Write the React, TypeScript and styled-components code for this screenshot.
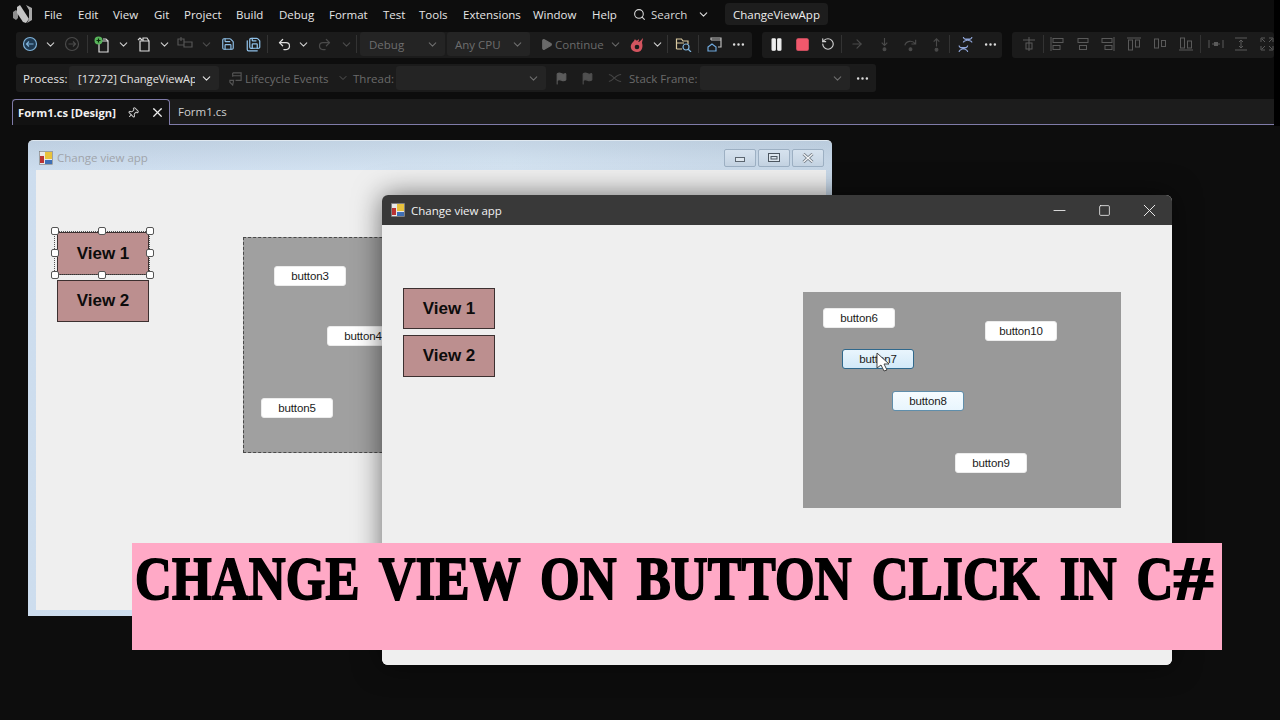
import React from "react";
import styled, { createGlobalStyle } from "styled-components";
import { ChevronDown, Search, Save, SaveAll, Undo2, Redo2, Play, Flag, X, Pin, Pause, RotateCcw, ArrowRight, MoreHorizontal, Minus, Square } from "lucide-react";

const Global = createGlobalStyle`
  html, body { margin: 0; padding: 0; background: #0d0d0d; }
  #root { width: 1280px; height: 720px; }
`;
const UI = `"Open Sans", "Noto Sans", sans-serif`;

const Page = styled.div`
  width: 1280px; height: 720px; background: #0d0d0d; overflow: hidden; position: relative;
  display: flex; flex-direction: column; font-family: ${UI}; font-size: 12px; color: #e4e4e4;
`;
const MenuBar = styled.div`
  height: 30px; box-sizing: border-box; padding: 0 0 2px 12px; display: flex; align-items: center; flex: none;
`;
const Logo = styled.svg`width: 22px; height: 22px; flex: none; margin-right: 10px;`;
const MenuItem = styled.span`width: ${p => p.$w}px; font-size: 11.5px; color: #e6e6e6; white-space: nowrap; flex: none;`;
const SearchBox = styled.div`display: flex; align-items: center; gap: 5px; width: 92px; flex: none; color: #d8d8d8; font-size: 11.5px;`;
const SolutionName = styled.div`
  width: 103px; height: 22px; background: #1d1d1d; border-radius: 4px; font-size: 11.5px; color: #eee;
  display: flex; align-items: center; justify-content: center; flex: none;
`;
const ToolRow = styled.div`height: 26px; display: flex; padding-left: 16px; gap: 10px; flex: none; margin-top: 2px;`;
const ToolGroup = styled.div`
  width: ${p => p.$w}px; height: 26px; background: #1b1b1b; border-radius: 3px; display: flex; align-items: center;
  flex: none; padding: 0 0 2px ${p => p.$pl ?? 1}px; box-sizing: border-box; overflow: hidden;
`;
const Slot = styled.span`
  width: ${p => p.$w ?? 26}px; height: 22px; display: flex; align-items: center; justify-content: center; flex: none;
  color: ${p => p.$c ?? "#dcdcdc"};
`;
const Sep = styled.span`width: 1px; height: 18px; background: #333; flex: none; margin: 0 ${p => p.$m ?? 0}px;`;
const Combo = styled.div`
  width: ${p => p.$w}px; height: 24px; border-radius: 3px; background: #242424; flex: none; display: flex; align-items: center;
  justify-content: space-between; padding: 0 6px 0 ${p => p.$pl ?? 9}px; box-sizing: border-box; color: ${p => p.$c ?? "#6e6e6e"};
  margin-right: ${p => p.$mr ?? 0}px; white-space: nowrap; overflow: hidden; font-size: 11.5px;
`;
const ComboText = styled.span`overflow: hidden; width: 117px; flex: none; font-size: 11.1px;`;
const Label = styled.span`color: ${p => p.$c ?? "#6a6a6a"}; font-size: 11.5px; flex: none; white-space: nowrap; width: ${p => p.$w ? p.$w + "px" : "auto"};`;
const DebugRow = styled.div`
  margin: 6px 0 0 16px; width: 860px; height: 28px; background: #1b1b1b; border-radius: 3px; display: flex; align-items: center;
  padding-left: 7px; box-sizing: border-box; flex: none;
`;
const TabStrip = styled.div`
  margin: 7px 6px 0 12px; height: 26px; box-sizing: border-box; background: #1c1c1c; border-bottom: 1.5px solid #7f7ba8; display: flex; align-items: stretch; flex: none;
`;
const ActiveTab = styled.div`
  width: 158px; box-sizing: border-box; height: 26px; background: #121212; border: 1px solid #7f7ba8; border-bottom: none; border-radius: 4px 4px 0 0;
  display: flex; align-items: center; padding-left: 5px; font-weight: 700; font-size: 11.2px; color: #f0f0f0; white-space: nowrap;
`;
const TabTitle = styled.span`width: 104px; flex: none;`;
const PinIcon = styled(Pin)`transform: rotate(45deg);`;
const InactiveTab = styled.div`display: flex; align-items: center; padding-left: 8px; font-size: 11.5px; color: #cfcfcf;`;

const Canvas = styled.div`flex: 1; position: relative;`;
const EdgeStrip = styled.div`position: absolute; top: 0; right: 0; width: 6px; height: 126px; background: #000;`;

const FormBack = styled.div`
  position: absolute; left: 28px; top: 140px; width: 804px; height: 476px; box-sizing: border-box;
  background: linear-gradient(180deg, rgba(150,170,190,.28), rgba(255,255,255,0) 30px), linear-gradient(90deg, #cdddee, #d6e5f3 60%, #c8d8e8);
  border-radius: 5px 5px 0 0; border-top: 1px solid #dfe8f0;
  display: flex; flex-direction: column; padding: 0 6px 6px 8px;
`;
const BackTitle = styled.div`
  height: 29px; box-sizing: border-box; padding: 4px 0 0 3px; display: flex; align-items: center; gap: 4px; color: #a0a4aa; font-size: 11.5px; flex: none; position: relative;
`;
const BackControls = styled.div`position: absolute; right: 2px; top: 8px; display: flex; gap: 2px;`;
const BackControl = styled.span`
  width: 32px; height: 18px; box-sizing: border-box; border: 1px solid #9db0c3; border-radius: 2px; display: flex; align-items: center; justify-content: center;
  background: linear-gradient(#d6e2ee, #c4d3e2);
`;
const Client = styled.div`flex: 1; background: #efefef; position: relative;`;

const FormFront = styled.div`
  position: absolute; left: 382px; top: 195px; width: 790px; height: 470px; border-radius: 6px; overflow: hidden;
  background: #efefef; box-shadow: 0 0 28px rgba(0,0,0,.55); display: flex; flex-direction: column;
`;
const FrontTitle = styled.div`
  height: 30px; background: #393939; color: #f2f2f2; display: flex; align-items: center; padding-left: 9px; gap: 6px; flex: none; font-size: 11.5px;
`;
const FrontControls = styled.div`margin-left: auto; display: flex; color: #f0f0f0;`;
const FrontControl = styled.span`width: 45px; display: flex; justify-content: center; align-items: center;`;

const ViewBtn = styled.div`
  position: absolute; left: ${p => p.$x}px; top: ${p => p.$y}px; width: ${p => p.$w}px; height: ${p => p.$h}px; box-sizing: border-box;
  background: #bc8f8f; border: 1px solid #3c3030; display: flex; align-items: center; justify-content: center;
  font-family: "Liberation Sans", Arial, sans-serif; font-weight: 700; font-size: 17px; color: #0c0c0c;
`;
const GrayPanel = styled.div`
  position: absolute; left: ${p => p.$x}px; top: ${p => p.$y}px; width: ${p => p.$w}px; height: ${p => p.$h}px; box-sizing: border-box;
  background: ${p => p.$bg}; border: ${p => p.$dash ? "1px dashed #4a4a4a" : "none"};
`;
const SmallBtn = styled.div`
  position: absolute; left: ${p => p.$x}px; top: ${p => p.$y}px; width: 72px; height: 20px; box-sizing: border-box; border-radius: 3px;
  background: ${p => p.$state === "hover" ? "linear-gradient(#e9f5fd,#d3e9f8)" : p.$state === "focus" ? "linear-gradient(#f6fcff,#e8f5fd)" : "#fff"};
  border: 1px solid ${p => p.$state === "hover" ? "#2f688c" : p.$state === "focus" ? "#5f8eab" : "#ececec"};
  display: flex; align-items: center; justify-content: center;
  font-family: "Liberation Sans", Arial, sans-serif; font-size: 11.5px; letter-spacing: -.15px; color: #1a1a1a;
`;
const Selection = styled.div`
  position: absolute; left: 18px; top: 61px; width: 96px; height: 44px; border: 1px dotted #555; box-sizing: border-box;
`;
const Handle = styled.span`
  position: absolute; left: ${p => p.$x}px; top: ${p => p.$y}px; width: 6px; height: 6px; background: #fff; border: 1px solid #555; border-radius: 2px;
`;
const Pointer = styled.svg`position: absolute; left: 494px; top: 127px; width: 13px; height: 20px;`;

const Banner = styled.div`
  position: absolute; left: 132px; top: 543px; width: 1090px; height: 107px; background: #ffa9c6; overflow: hidden;
`;
const BannerText = styled.div`
  font-family: "Liberation Serif", serif; font-weight: 700; font-size: 61px; line-height: 72px; color: #000; white-space: nowrap;
  width: max-content; -webkit-text-stroke: 1.8px #000; transform-origin: 0 0; transform: scaleX(0.835); margin: 0 0 0 3px; word-spacing: 8.5px; letter-spacing: .2px;
`;
const HashMark = styled.span`display: inline-block; transform-origin: 0 50%; transform: scaleX(1.55);`;

const Chev = ({ c = "#cfcfcf" }: { c?: string }) => <Slot $w={14} $c={c}><ChevronDown size={13} strokeWidth={2} /></Slot>;
const WinIcon = () => (
  <svg width="14" height="14" viewBox="0 0 14 14">
    <rect x=".5" y=".5" width="13" height="13" fill="#e8e8e8" stroke="#777" strokeWidth=".6" />
    <rect x="6" y="1" width="7" height="7" fill="#e8c23c" />
    <rect x="1" y="5" width="4" height="7" fill="#b33" />
    <rect x="6" y="9" width="7" height="4" fill="#3f6fb5" />
  </svg>
);
const AlignIcon = ({ kind }: { kind: number }) => {
  const s = { stroke: "#5a5a5a", strokeWidth: 1, fill: "none" };
  const shapes: Record<number, React.ReactNode> = {
    0: <><path d="M2 4h12M8 1v14" {...s} /><rect x="5" y="7" width="6" height="6" {...s} /></>,
    1: <><path d="M2 1v14" {...s} /><rect x="4" y="2.5" width="10" height="4" {...s} /><rect x="4" y="9.5" width="7" height="4" {...s} /></>,
    2: <><rect x="3" y="2.5" width="10" height="4" {...s} /><rect x="4.5" y="9.5" width="7" height="4" {...s} /></>,
    3: <><path d="M14 1v14" {...s} /><rect x="2" y="2.5" width="10" height="4" {...s} /><rect x="5" y="9.5" width="7" height="4" {...s} /></>,
    4: <><path d="M1 2h14" {...s} /><rect x="2.5" y="4" width="4" height="10" {...s} /><rect x="9.5" y="4" width="4" height="7" {...s} /></>,
    5: <><rect x="2.5" y="3" width="4" height="9" {...s} /><rect x="9.5" y="4.5" width="4" height="6" {...s} /></>,
    6: <><path d="M1 14h14" {...s} /><rect x="2.5" y="2" width="4" height="10" {...s} /><rect x="9.5" y="5" width="4" height="7" {...s} /></>,
    7: <><path d="M1 4v8M15 4v8M4 8h8" {...s} /><rect x="6" y="6" width="4" height="4" fill="#5a5a5a" /></>,
    8: <><path d="M2 2h12M2 14h12M8 4v8M6 6l2-2 2 2M6 10l2 2 2-2" {...s} /></>,
    9: <><path d="M2 6V2h4M10 2h4v4M14 10v4h-4M6 14H2v-4M3 3l3 3M13 3l-3 3M13 13l-3-3M3 13l3-3" {...s} /></>,
  };
  return <svg width="16" height="16" viewBox="0 0 16 16">{shapes[kind]}</svg>;
};

const Wire = ({ children, w = 16 }: { children: React.ReactNode; w?: number }) => (
  <svg width={w} height={w} viewBox="0 0 16 16" fill="none" strokeWidth="1.2" stroke="currentColor">{children}</svg>
);

export default function App() {
  const menus: [string, number][] = [["File", 34], ["Edit", 35], ["View", 41], ["Git", 30], ["Project", 52], ["Build", 43], ["Debug", 50], ["Format", 54], ["Test", 36], ["Tools", 44], ["Extensions", 70], ["Window", 59], ["Help", 41]];
  return (
    <Page>
      <Global />
      <MenuBar>
        <Logo viewBox="0 0 22 22">
          <path d="M1 9l3-2 2 2v6l-2 2-3-2z" fill="#8f8f8f" />
          <path d="M5 4l3-2 9 14-3 4-3-1-6-9z" fill="#c4c4c4" />
          <path d="M14 2l6 3v12l-5 3 2-4V7z" fill="#a8a8a8" />
        </Logo>
        {menus.map(([m, w]) => <MenuItem key={m} $w={w}>{m}</MenuItem>)}
        <SearchBox><Search size={13} /><span>Search</span><Slot $w={22}><ChevronDown size={13} /></Slot></SearchBox>
        <SolutionName>ChangeViewApp</SolutionName>
      </MenuBar>
      <ToolRow>
        <ToolGroup $w={736} $pl={1}>
          <Slot $w={26} $c="#7fb2d9"><svg width="16" height="16" viewBox="0 0 16 16" fill="none" stroke="currentColor" strokeWidth="1.2"><circle cx="8" cy="8" r="6.5" fill="#1f3a52" /><path d="M11.5 8h-7M7 5.5L4.5 8 7 10.5" /></svg></Slot>
          <Chev />
          <Slot $w={30} $c="#4a4a4a"><svg width="16" height="16" viewBox="0 0 16 16" fill="none" stroke="currentColor" strokeWidth="1.2"><circle cx="8" cy="8" r="6.5" /><path d="M4.5 8h7M9 5.5L11.5 8 9 10.5" /></svg></Slot>
          <Sep />
          <Slot $w={28}><svg width="17" height="17" viewBox="0 0 17 17" fill="none" stroke="#dcdcdc" strokeWidth="1.2"><path d="M6 5h8v11H5V8" /><path d="M9 3h3l2 2" /><circle cx="4.5" cy="4.5" r="4" fill="#57b35a" stroke="none" /><path d="M2.5 4.5h4M4.5 2.5v4" stroke="#0b2a0b" /></svg></Slot>
          <Chev />
          <Slot $w={27}><svg width="16" height="16" viewBox="0 0 16 16" fill="none" stroke="#dcdcdc" strokeWidth="1.2"><path d="M4 5h9v10H4zM7 5V2h4l2 3M2 4l2-2 2 2" /></svg></Slot>
          <Chev />
          <Slot $w={28} $c="#555"><Wire><path d="M7 6h8v5H7zM1 3h6v6H1zM4 1v4M2 3h4" /></Wire></Slot>
          <Chev c="#4c4c4c" />
          <Slot $w={30} $c="#8fc0e8"><Save size={14} /></Slot>
          <Slot $w={20} $c="#8fc0e8"><SaveAll size={15} /></Slot>
          <Sep $m={4} />
          <Slot $w={24}><Undo2 size={15} /></Slot>
          <Chev />
          <Slot $w={29} $c="#4a4a4a"><Redo2 size={15} /></Slot>
          <Chev c="#4c4c4c" />
          <Sep $m={3} />
          <Combo $w={85} $mr={2}><span>Debug</span><ChevronDown size={13} /></Combo>
          <Combo $w={83} $mr={8} $pl={8}><span>Any CPU</span><ChevronDown size={13} /></Combo>
          <Slot $w={17} $c="#6a6a6a"><Play size={13} fill="currentColor" /></Slot>
          <Label $w={52}>Continue</Label>
          <Slot $w={16} $c="#666"><ChevronDown size={13} /></Slot>
          <Slot $w={27}><svg width="16" height="17" viewBox="0 0 16 17"><path d="M8 16C3 16 1 12 2 9c1-3 3-3 4-6 1 2 2 2 4 0 0 1 0 2-1 3 2 0 3-2 5-4 0 2-1 3-1 5 1 2 1 9-5 9z" fill="#d3545f" /><circle cx="8" cy="11" r="2.3" fill="#1b1b1b" /></svg></Slot>
          <Chev />
          <Sep $m={3} />
          <Slot $w={24}><svg width="17" height="16" viewBox="0 0 17 16" fill="none" strokeWidth="1.2"><path d="M1.5 13V3h5l1.5 2h5v3M1.5 13H7M1.5 7H9" stroke="#d9c9a0" /><circle cx="11" cy="11" r="3" stroke="#7fb2d9" /><path d="M13 13l3 3" stroke="#7fb2d9" /></svg></Slot>
          <Sep $m={3} />
          <Slot $w={25}><svg width="16" height="16" viewBox="0 0 16 16" fill="none" strokeWidth="1.2"><path d="M4 4V2h10v9h-3M4 4h10" stroke="#bdbdbd" /><path d="M1 11l4-3 4 3v4H1z" stroke="#6fa8dc" /></svg></Slot>
          <Slot $w={22}><MoreHorizontal size={15} /></Slot>
        </ToolGroup>
        <ToolGroup $w={240} $pl={1}>
          <Slot $w={26} $c="#f0f0f0"><Pause size={15} fill="currentColor" /></Slot>
          <Slot $w={26} $c="#f0586c"><Square size={15} fill="currentColor" /></Slot>
          <Slot $w={26} $c="#cfcfcf"><RotateCcw size={14} /></Slot>
          <Sep />
          <Slot $w={30} $c="#4a4a4a"><ArrowRight size={14} /></Slot>
          <Slot $w={24} $c="#4a4a4a"><Wire w={15}><path d="M8 1v8M5 6l3 3 3-3" /><circle cx="8" cy="13" r="1.5" fill="currentColor" /></Wire></Slot>
          <Slot $w={28} $c="#4a4a4a"><Wire w={15}><path d="M2 9c1-5 8-6 11-2M13.500 3v4.500H9" /><circle cx="8" cy="13" r="1.5" fill="currentColor" /></Wire></Slot>
          <Slot $w={24} $c="#4a4a4a"><Wire w={15}><path d="M8 10V2M5 5l3-3 3 3" /><circle cx="8" cy="13.500" r="1.500" fill="currentColor" /></Wire></Slot>
          <Sep $m={1} />
          <Slot $w={29} $c="#8fa5d8"><svg width="17" height="17" viewBox="0 0 16 16" fill="none" stroke="currentColor" strokeWidth="1.1"><path d="M6 1c0 4 8 2 8 5M14 1c0 4-8 2-8 5M2 9c0 4 8 2 8 6M10 9c0 4-8 2-8 6M7.500 3h5M3.500 11h5" /></svg></Slot>
          <Slot $w={20}><MoreHorizontal size={15} /></Slot>
        </ToolGroup>
        <ToolGroup $w={262} $pl={2}>
          <Slot $w={29}><AlignIcon kind={0} /></Slot>
          <Sep />
          {[1, 2, 3, 4, 5, 6].map(k => <Slot key={k} $w={25.8}><AlignIcon kind={k} /></Slot>)}
          <Sep $m={1.5} />
          {[7, 8, 9].map(k => <Slot key={k} $w={25.8}><AlignIcon kind={k} /></Slot>)}
        </ToolGroup>
      </ToolRow>
      <DebugRow>
        <Label $c="#e4e4e4" $w={46}>Process:</Label>
        <Combo $w={150} $c="#e4e4e4" $mr={6}><ComboText>[17272] ChangeViewAp</ComboText><ChevronDown size={13} /></Combo>
        <Slot $w={20} $c="#555"><Wire w={15}><path d="M5 2h9v8H8M5 2v4M5 5h9M2 10h4l-1 5-3-3z" /></Wire></Slot>
        <Label $w={88}>Lifecycle Events</Label>
        <Slot $w={20} $c="#555"><ChevronDown size={12} /></Slot>
        <Label $w={43}>Thread:</Label>
        <Combo $w={150} $mr={2}><span /><ChevronDown size={13} /></Combo>
        <Slot $w={26} $c="#5c5c5c"><Flag size={13} fill="currentColor" /></Slot>
        <Slot $w={26} $c="#4f4f4f"><Flag size={13} fill="currentColor" /></Slot>
        <Slot $w={29} $c="#444"><Wire w={14}><path d="M1 4c5 0 7 8 14 8M1 12c5 0 7-8 14-8" /></Wire></Slot>
        <Label $w={71}>Stack Frame:</Label>
        <Combo $w={150}><span /><ChevronDown size={13} /></Combo>
        <Slot $w={24}><MoreHorizontal size={15} /></Slot>
      </DebugRow>
      <TabStrip>
        <ActiveTab>
          <TabTitle>Form1.cs [Design]</TabTitle>
          <Slot $w={22} $c="#c8c8c8"><PinIcon size={12} /></Slot>
          <Slot $w={26} $c="#eee"><X size={15} /></Slot>
        </ActiveTab>
        <InactiveTab>Form1.cs</InactiveTab>
      </TabStrip>
      <Canvas />
      <EdgeStrip />

      <FormBack>
        <BackTitle>
          <WinIcon />
          <span>Change view app</span>
          <BackControls>
            <BackControl><svg width="12" height="10"><rect x="1.500" y="4.500" width="9" height="4" fill="#dde6ee" stroke="#5c6670" /></svg></BackControl>
            <BackControl><svg width="12" height="10"><rect x=".5" y=".5" width="11" height="8" fill="#dde6ee" stroke="#4c5660" /><rect x="3" y="3.500" width="6" height="2.500" fill="none" stroke="#4c5660" /></svg></BackControl>
            <BackControl><svg width="12" height="10"><path d="M1.500 1l9 8M10.500 1l-9 8" stroke="#6c7680" strokeWidth="3" /><path d="M1.500 1l9 8M10.500 1l-9 8" stroke="#f4f6f8" strokeWidth="1.400" /></svg></BackControl>
          </BackControls>
        </BackTitle>
        <Client>
          <ViewBtn $x={21} $y={62} $w={92} $h={43}>View 1</ViewBtn>
          <ViewBtn $x={21} $y={110} $w={92} $h={42}>View 2</ViewBtn>
          <Selection />
          <Handle $x={15} $y={57} /><Handle $x={62} $y={57} /><Handle $x={110} $y={57} />
          <Handle $x={15} $y={79} /><Handle $x={110} $y={79} />
          <Handle $x={15} $y={101} /><Handle $x={62} $y={101} /><Handle $x={110} $y={101} />
          <GrayPanel $x={207} $y={67} $w={200} $h={216} $bg="#a0a0a0" $dash />
          <SmallBtn $x={238} $y={96}>button3</SmallBtn>
          <SmallBtn $x={291} $y={156}>button4</SmallBtn>
          <SmallBtn $x={225} $y={228}>button5</SmallBtn>
        </Client>
      </FormBack>

      <FormFront>
        <FrontTitle>
          <WinIcon />
          <span>Change view app</span>
          <FrontControls>
            <FrontControl><Minus size={19} strokeWidth={1.1} /></FrontControl>
            <FrontControl><Square size={13} strokeWidth={1.5} /></FrontControl>
            <FrontControl><X size={21} strokeWidth={1.1} /></FrontControl>
          </FrontControls>
        </FrontTitle>
        <Client>
          <ViewBtn $x={21} $y={63} $w={92} $h={41}>View 1</ViewBtn>
          <ViewBtn $x={21} $y={110} $w={92} $h={42}>View 2</ViewBtn>
          <GrayPanel $x={421} $y={67} $w={318} $h={216} $bg="#999" />
          <SmallBtn $x={441} $y={83}>button6</SmallBtn>
          <SmallBtn $x={603} $y={96}>button10</SmallBtn>
          <SmallBtn $x={460} $y={124} $state="hover">button7</SmallBtn>
          <SmallBtn $x={510} $y={166} $state="focus">button8</SmallBtn>
          <SmallBtn $x={573} $y={228}>button9</SmallBtn>
          <Pointer viewBox="0 0 13 20"><path d="M1 1v15l4-3 3 6 3-1-3-6h5z" fill="#fff" stroke="#444" strokeWidth="1" /></Pointer>
        </Client>
      </FormFront>

      <Banner><BannerText>CHANGE VIEW ON BUTTON CLICK IN C<HashMark>#</HashMark></BannerText></Banner>
    </Page>
  );
}
